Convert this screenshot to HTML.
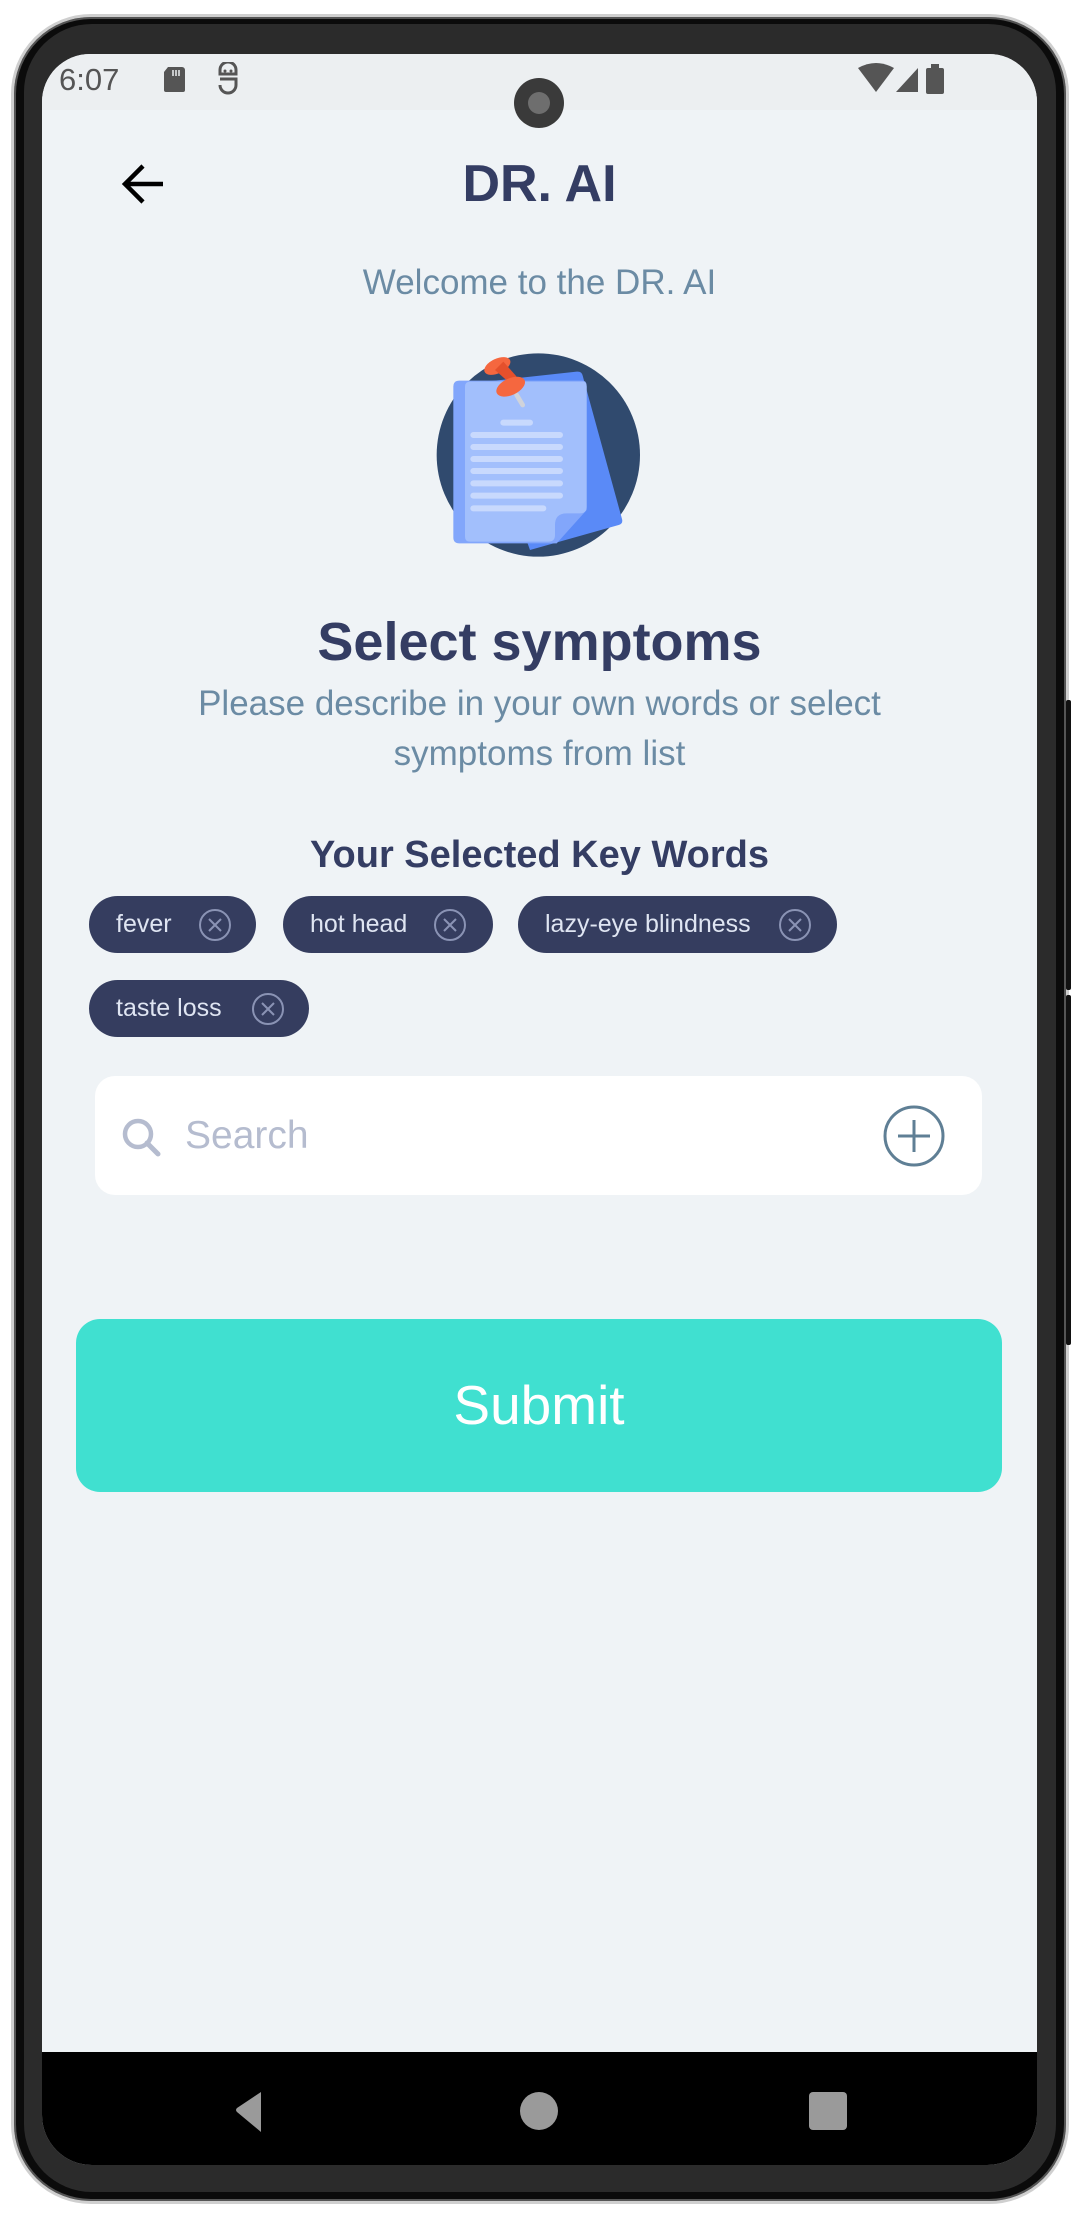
<!DOCTYPE html>
<html><head><meta charset="utf-8"><style>
*{margin:0;padding:0;box-sizing:border-box}
body{width:1080px;height:2215px;background:#fff;position:relative;overflow:hidden;font-family:"Liberation Sans",sans-serif}
.abs{position:absolute}
.phone{left:11px;top:14px;width:1058px;height:2190px;border-radius:80px;background:#0b0b0b;border:3px solid #cfcfcf;box-shadow:0 0 0 2px #555 inset}
.bezel{left:24px;top:24px;width:1032px;height:2168px;border-radius:68px;background:#2b2b2b}
.screen{left:42px;top:54px;width:995px;height:2111px;border-radius:48px 48px 50px 50px;background:#eff3f6;overflow:hidden}
.t{position:absolute;width:100%;text-align:center}
.chip{position:absolute;height:57px;border-radius:29px;background:#353d5f;color:#dfe5f2;font-size:25px;line-height:57px;padding-left:27px}
.chip svg{position:absolute;top:12px}
</style></head><body>
<div class="abs phone"></div>
<div class="abs bezel"></div>
<div class="abs screen">
  <div class="abs" style="left:0;top:0;width:995px;height:56px;background:#eceff1"></div>
  <div class="abs" style="left:17px;top:8px;font-size:31px;color:#555">6:07</div>
  <svg class="abs" style="left:118px;top:10px" width="30" height="30" viewBox="0 0 30 30"><path d="M8 3h14a3 3 0 0 1 3 3v20a2 2 0 0 1-2 2H6a2 2 0 0 1-2-2V8z" fill="#555"/><path d="M13 6v6M16 6v6M19 6v6" stroke="#eceff1" stroke-width="1.5"/></svg>
  <svg class="abs" style="left:172px;top:8px" width="28" height="34" viewBox="0 0 28 34"><path d="M6 8a8 8 0 0 1 16 0v4H6zM6 17h16v6a8 8 0 0 1-16 0" fill="none" stroke="#555" stroke-width="3"/><circle cx="11" cy="9" r="1.5" fill="#555"/><circle cx="17" cy="9" r="1.5" fill="#555"/></svg>
  <svg class="abs" style="left:816px;top:8px" width="100" height="34" viewBox="0 0 100 34"><path d="M0 6q18-10 36 0L18 30z" fill="#555"/><path d="M38 30L60 6v24z" fill="#555"/><rect x="68" y="6" width="18" height="26" rx="2" fill="#555"/><rect x="73" y="2" width="8" height="5" fill="#555"/></svg>
  <div class="abs" style="left:472px;top:24px;width:50px;height:50px;border-radius:50%;background:#3a3a3a"></div>
  <div class="abs" style="left:486px;top:38px;width:22px;height:22px;border-radius:50%;background:#6e6e6e"></div>
  <svg class="abs" style="left:77px;top:108px" width="48" height="44" viewBox="0 0 48 44"><path d="M44 22H6M24 4L6 22l18 18" fill="none" stroke="#000" stroke-width="4.5"/></svg>
  <div class="t" style="top:100px;font-size:52px;font-weight:bold;color:#343d63">DR. AI</div>
  <div class="t" style="top:209px;font-size:35px;color:#6b8ba4">Welcome to the DR. AI</div>
  <svg class="abs" style="left:378px;top:286px" width="240" height="240" viewBox="0 0 720 720">
    <circle cx="355" cy="345" r="305" fill="#304a6e"/>
    <path d="M150 130L470 95q15-2 18 12l118 430q4 14-10 18L330 630z" fill="#5a8af7"/>
    <path d="M100 140q0-18 18-18h370q12 0 12 18v370l-90 100H118q-18 0-18-18z" fill="#82a6fb"/>
    <path d="M135 140q0-15 15-15h340q10 0 10 15v360q0 20-20 20H440q-35 0-35 35v30q0 20-20 20H150q-15 0-15-15z" fill="#a2bffc"/>
    <g stroke="#c8d9fd" stroke-width="18" stroke-linecap="round"><path d="M250 248h80M160 285h260M160 321h260M160 357h260M160 393h260M160 430h260M160 467h260M160 505h210"/></g>
    <path d="M290 165l18 30" stroke="#d0d3da" stroke-width="14" stroke-linecap="round"/>
    <ellipse cx="232" cy="78" rx="42" ry="22" transform="rotate(-25 232 78)" fill="#f5673f"/>
    <path d="M225 90l45 40 20-20-40-45z" fill="#e5502c"/>
    <ellipse cx="272" cy="140" rx="46" ry="25" transform="rotate(-25 272 140)" fill="#f5673f"/>
  </svg>
  <div class="t" style="top:557px;font-size:54px;font-weight:bold;color:#343d63">Select symptoms</div>
  <div class="t" style="top:625px;font-size:35px;line-height:50px;color:#6b8ba4">Please describe in your own words or select<br>symptoms from list</div>
  <div class="t" style="top:780px;font-size:38px;font-weight:bold;color:#343d63">Your Selected Key Words</div>
  <div class="chip" style="left:47px;top:842px;width:167px">fever<svg style="left:109px" width="34" height="34" viewBox="0 0 34 34"><circle cx="17" cy="17" r="15" fill="none" stroke="#8a93b4" stroke-width="2"/><path d="M11 11l12 12M23 11l-12 12" stroke="#8a93b4" stroke-width="2"/></svg></div>
  <div class="chip" style="left:241px;top:842px;width:210px">hot head<svg style="left:150px" width="34" height="34" viewBox="0 0 34 34"><circle cx="17" cy="17" r="15" fill="none" stroke="#8a93b4" stroke-width="2"/><path d="M11 11l12 12M23 11l-12 12" stroke="#8a93b4" stroke-width="2"/></svg></div>
  <div class="chip" style="left:476px;top:842px;width:319px">lazy-eye blindness<svg style="left:260px" width="34" height="34" viewBox="0 0 34 34"><circle cx="17" cy="17" r="15" fill="none" stroke="#8a93b4" stroke-width="2"/><path d="M11 11l12 12M23 11l-12 12" stroke="#8a93b4" stroke-width="2"/></svg></div>
  <div class="chip" style="left:47px;top:926px;width:220px">taste loss<svg style="left:162px" width="34" height="34" viewBox="0 0 34 34"><circle cx="17" cy="17" r="15" fill="none" stroke="#8a93b4" stroke-width="2"/><path d="M11 11l12 12M23 11l-12 12" stroke="#8a93b4" stroke-width="2"/></svg></div>
  <div class="abs" style="left:53px;top:1022px;width:887px;height:119px;border-radius:20px;background:#fff"></div>
  <svg class="abs" style="left:78px;top:1062px" width="44" height="44" viewBox="0 0 44 44"><circle cx="18" cy="18" r="13" fill="none" stroke="#b5bccf" stroke-width="4.5"/><path d="M27 27l11 11" stroke="#b5bccf" stroke-width="5" stroke-linecap="round"/></svg>
  <div class="abs" style="left:143px;top:1060px;font-size:39px;color:#b5bccf">Search</div>
  <svg class="abs" style="left:840px;top:1050px" width="64" height="64" viewBox="0 0 64 64"><circle cx="32" cy="32" r="29" fill="none" stroke="#5f7f95" stroke-width="3"/><path d="M32 16v32M16 32h32" stroke="#5f7f95" stroke-width="3"/></svg>
  <div class="abs" style="left:34px;top:1265px;width:926px;height:173px;border-radius:24px;background:#40e0d0;color:#fff;font-size:55px;text-align:center;line-height:173px">Submit</div>
  <div class="abs" style="left:0;top:1998px;width:995px;height:120px;background:#000"></div>
  <svg class="abs" style="left:185px;top:2036px" width="40" height="44" viewBox="0 0 40 44"><path d="M34 2v40L10 22q-2-2 0-4z" fill="#9a9a9a"/></svg>
  <div class="abs" style="left:478px;top:2038px;width:38px;height:38px;border-radius:50%;background:#9a9a9a"></div>
  <div class="abs" style="left:767px;top:2038px;width:38px;height:38px;border-radius:4px;background:#9a9a9a"></div>
</div>
<div class="abs" style="left:1066px;top:700px;width:5px;height:290px;background:#111;border-radius:2px"></div>
<div class="abs" style="left:1066px;top:995px;width:5px;height:350px;background:#111;border-radius:2px"></div>
</body></html>
